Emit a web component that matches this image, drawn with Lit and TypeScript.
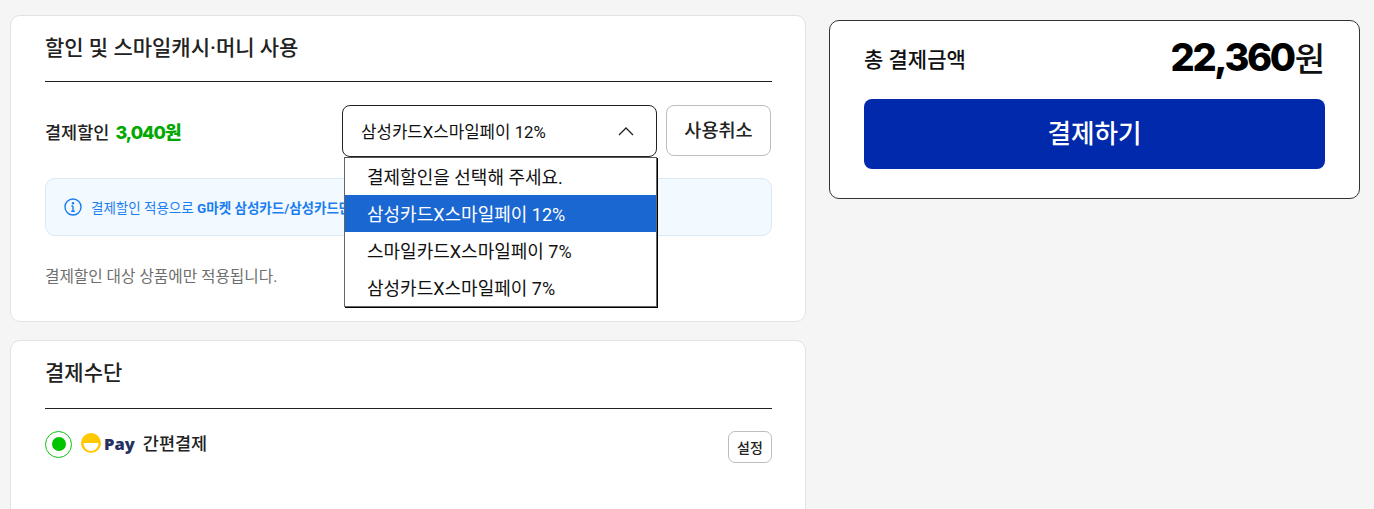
import { LitElement, html, css } from "lit";
import { customElement } from "lit/decorators.js";

@customElement("app-root")
export class AppRoot extends LitElement {
  static styles = css`
    :host {
      display: block;
      height: 509px;
      overflow: hidden;
      background: #f5f5f5;
      font-family: Roboto, "Noto Sans CJK KR", sans-serif;
      color: #111;
    }
    .page {
      display: flex;
      align-items: flex-start;
      gap: 23px;
      padding: 15px 14px 0 10px;
    }
    .left {
      width: 796px;
      flex: none;
      display: flex;
      flex-direction: column;
      gap: 18px;
    }
    .card {
      background: #fff;
      border: 1px solid #e2e2e2;
      border-radius: 10px;
      padding: 0 33px 0 34px;
      box-sizing: border-box;
    }
    .card--discount {
      height: 307px;
    }
    .card--method {
      height: 200px;
    }
    .card__title {
      margin: 0;
      height: 66px;
      box-sizing: border-box;
      padding-top: 18px;
      border-bottom: 1px solid #222;
      font-size: 21px;
      line-height: 28px;
      font-weight: 500;
      color: #222;
    }
    .card--method .card__title {
      height: 68px;
    }
    .discount-row {
      display: flex;
      align-items: center;
      margin-top: 23px;
      height: 52px;
    }
    .discount-label {
      flex: 1;
      font-size: 17.5px;
      font-weight: 500;
      color: #222;
      display: flex;
      align-items: baseline;
      gap: 6px;
    }
    .discount-value {
      color: #00a800;
      font-size: 18px;
      font-weight: 800;
      font-family: Inter, "Noto Sans CJK KR", sans-serif;
      letter-spacing: -1px;
    }
    .select-wrap {
      position: relative;
      width: 315px;
      margin-right: 9px;
    }
    .select {
      height: 52px;
      box-sizing: border-box;
      border: 1px solid #222;
      border-radius: 8px;
      background: #fff;
      display: flex;
      align-items: center;
      justify-content: space-between;
      padding: 0 21px 0 18px;
      font-size: 16.8px;
      color: #111;
    }
    .select svg {
      width: 18px;
      height: 18px;
      display: block;
    }
    .menu {
      position: absolute;
      z-index: 2;
      top: 52px;
      left: 2px;
      width: 313px;
      height: 150px;
      box-sizing: border-box;
      background: #fff;
      border: 1px solid #666;
      border-top-color: #555;
      box-shadow: 1px 1px 0 #000;
      font-size: 18px;
    }
    .menu__item {
      height: 37px;
      line-height: 39px;
      padding-left: 22px;
      color: #111;
    }
    .menu__item--on {
      background: #1a67d2;
      color: #fff;
    }
    .ghost-btn {
      flex: none;
      width: 105px;
      height: 51px;
      box-sizing: border-box;
      border: 1px solid #bdbdbd;
      border-radius: 8px;
      background: #fff;
      font: 500 18.6px Roboto, "Noto Sans CJK KR", sans-serif;
      color: #222;
      padding: 0 0 4px;
      margin-right: 1px;
      align-self: flex-start;
    }
    .notice {
      margin-top: 21px;
      height: 58px;
      box-sizing: border-box;
      border: 1px solid #d8e9f8;
      border-radius: 10px;
      background: #f2f9ff;
      display: flex;
      align-items: center;
      gap: 9px;
      padding: 0 18px;
      font-size: 13.5px;
      color: #1a7ef0;
      white-space: nowrap;
    }
    .notice svg {
      width: 18px;
      height: 18px;
      flex: none;
    }
    .notice strong {
      font-weight: 700;
    }
    .hint {
      margin: 30px 0 0;
      font-size: 15.7px;
      line-height: 22px;
      color: #6e6e6e;
    }
    .method-row {
      display: flex;
      align-items: flex-start;
      justify-content: space-between;
      padding-top: 21px;
    }
    .method {
      display: flex;
      align-items: center;
      height: 28px;
    }
    .radio {
      width: 27px;
      height: 27px;
      box-sizing: border-box;
      border: 1px solid #0cc20c;
      border-radius: 50%;
      display: flex;
      align-items: center;
      justify-content: center;
      margin-right: 9px;
    }
    .radio::after {
      content: "";
      width: 14px;
      height: 14px;
      border-radius: 50%;
      background: #00c400;
    }
    .pay-logo {
      width: 20px;
      height: 20px;
      margin-right: 3px;
      margin-top: -2px;
      display: block;
    }
    .pay-word {
      font: 800 16.5px "Open Sans", sans-serif;
      color: #26305f;
      margin-right: 8px;
      margin-top: -1px;
    }
    .method-name {
      font-size: 17.5px;
      font-weight: 500;
      color: #222;
      margin-top: -3px;
    }
    .small-btn {
      width: 44px;
      height: 32px;
      margin-top: 1px;
      box-sizing: border-box;
      border: 1px solid #bdbdbd;
      border-radius: 7px;
      background: #fff;
      font: 500 14px Roboto, "Noto Sans CJK KR", sans-serif;
      color: #222;
      padding: 0;
    }
    .summary {
      width: 531px;
      height: 179px;
      margin-top: 5px;
      flex: none;
      box-sizing: border-box;
      background: #fff;
      border: 1px solid #333;
      border-radius: 10px;
      padding: 0 34px;
    }
    .summary__row {
      height: 78px;
      display: flex;
      align-items: center;
      justify-content: space-between;
    }
    .summary__label {
      font-size: 21px;
      font-weight: 500;
      color: #111;
      margin-top: -4px;
    }
    .summary__total {
      display: flex;
      align-items: baseline;
      color: #000;
      margin-top: -6px;
    }
    .summary__num {
      font: 800 38px Inter, sans-serif;
      letter-spacing: -2.4px;
    }
    .summary__unit {
      font-size: 33px;
      font-weight: 500;
      margin-left: 1px;
      color: #111;
    }
    .pay-btn {
      display: block;
      width: 100%;
      height: 70px;
      border: 0;
      border-radius: 8px;
      background: #0029ac;
      color: #fff;
      font: 500 25.6px Roboto, "Noto Sans CJK KR", sans-serif;
      padding: 0 0 5px;
    }
  `;

  render() {
    return html`
      <div class="page">
        <div class="left">
          <section class="card card--discount">
            <h2 class="card__title">할인 및 스마일캐시·머니 사용</h2>
            <div class="discount-row">
              <div class="discount-label">결제할인 <span class="discount-value">3,040원</span></div>
              <div class="select-wrap">
                <div class="select">
                  <span>삼성카드X스마일페이 12%</span>
                  <svg viewBox="0 0 18 18" fill="none" stroke="#222" stroke-width="1.3">
                    <path d="M2 13 9 6l7 7" />
                  </svg>
                </div>
                <div class="menu">
                  <div class="menu__item">결제할인을 선택해 주세요.</div>
                  <div class="menu__item menu__item--on">삼성카드X스마일페이 12%</div>
                  <div class="menu__item">스마일카드X스마일페이 7%</div>
                  <div class="menu__item">삼성카드X스마일페이 7%</div>
                </div>
              </div>
              <button class="ghost-btn">사용취소</button>
            </div>
            <div class="notice">
              <svg viewBox="0 0 18 18" fill="none" stroke="#1a7ef0" stroke-width="1.4">
                <circle cx="9" cy="9" r="8" />
                <path d="M9 8v5.2M7.4 8H9M7.2 13.2h3.6" />
                <circle cx="9" cy="5.2" r=".6" fill="#1a7ef0" />
              </svg>
              <span>결제할인 적용으로 <strong>G마켓 삼성카드/삼성카드만</strong></span>
            </div>
            <p class="hint">결제할인 대상 상품에만 적용됩니다.</p>
          </section>
          <section class="card card--method">
            <h2 class="card__title">결제수단</h2>
            <div class="method-row">
              <div class="method">
                <span class="radio"></span>
                <svg class="pay-logo" viewBox="0 0 20 20">
                  <circle cx="10" cy="10" r="10" fill="#ffc800" />
                  <path d="M2.4 10h15.2a7.6 8 0 0 1-15.2 0z" fill="#fff" />
                </svg>
                <span class="pay-word">Pay</span>
                <span class="method-name">간편결제</span>
              </div>
              <button class="small-btn">설정</button>
            </div>
          </section>
        </div>
        <aside class="summary">
          <div class="summary__row">
            <span class="summary__label">총 결제금액</span>
            <span class="summary__total"><span class="summary__num">22,360</span><span class="summary__unit">원</span></span>
          </div>
          <button class="pay-btn">결제하기</button>
        </aside>
      </div>
    `;
  }
}
